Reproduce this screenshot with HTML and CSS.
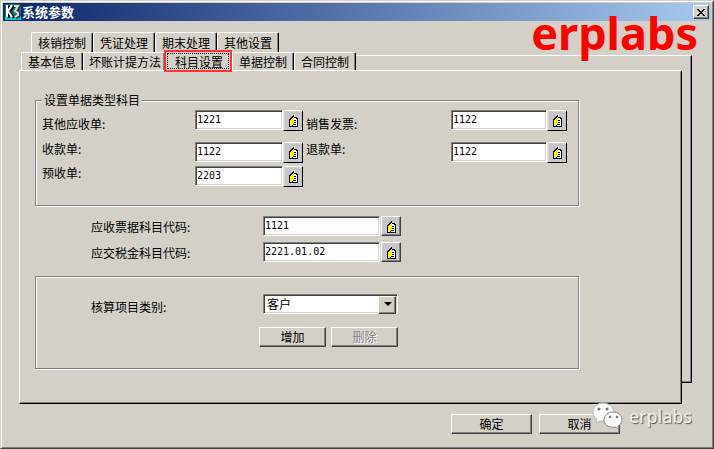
FILE: index.html
```html
<!DOCTYPE html>
<html lang="zh-CN">
<head>
  <meta charset="UTF-8">
  <meta name="viewport" content="width=device-width, initial-scale=1.0">
  <title>系统参数</title>
  <link rel="stylesheet" href="styles.css">
</head>
<body>

<svg class="symbols" aria-hidden="true">
  <symbol id="book" viewBox="0 0 9 13">
    <path d="M0 5h1V4h1V3h1V2h1V1h1v2h3v1h1v9H0z" fill="#000"/>
    <path d="M5 4h2v1h1v7H4v-1h1z" fill="#fff"/>
    <path d="M1 6h1V5h1V4h1V3h1v7H4v1H3v1H1z" fill="#ff0"/>
    <path d="M5 6h2v1H5zM5 8h2v1H5zM4 10h3v1H4z" fill="#000"/>
  </symbol>
</svg>

<div class="window">
  <header class="titlebar">
    <svg class="logo" viewBox="0 0 16 16" aria-hidden="true">
      <rect width="16" height="16" fill="#087878"/>
      <path d="M0 12h16v4H0z" fill="#00d0d0"/>
      <path d="M4 2v12M9 2L5 8l4 6" stroke="#000" stroke-width="2" fill="none"/>
      <path d="M10 2h4l-2 5 2 2v3l-3 2" stroke="#333" stroke-width="3" fill="none"/>
      <path d="M2 1v12M7 1L3 7l4 6" stroke="#fff" stroke-width="2" fill="none"/>
      <path d="M9 2h4l-3 5 3 2v2l-3 2" stroke="#ddd" stroke-width="2" fill="none"/>
    </svg>
    <h1>系统参数</h1>
    <button type="button" class="close" aria-label="关闭">
      <svg viewBox="0 0 9 7" shape-rendering="crispEdges"><path d="M0 0h2v1h1v1h2V1h1V0h2v1H7v1H6v1H5v1h1v1h1v1h1v1H6V6H5V5H3v1H2v1H0V6h1V5h1V4h1V3H2V2H1V1H0z"/></svg>
    </button>
  </header>

  <form class="content">
    <nav class="tabs tabs-back">
      <button type="button" class="tab">核销控制</button>
      <button type="button" class="tab">凭证处理</button>
      <button type="button" class="tab">期末处理</button>
      <button type="button" class="tab">其他设置</button>
    </nav>

    <div class="stack">
      <div class="sheet-back"></div>
      <div class="front">
        <nav class="tabs">
          <button type="button" class="tab">基本信息</button>
          <button type="button" class="tab tab-wide">坏账计提方法</button>
          <button type="button" class="tab active"><span>科目设置</span></button>
          <button type="button" class="tab">单据控制</button>
          <button type="button" class="tab">合同控制</button>
        </nav>

        <section class="sheet">
          <fieldset class="group accounts">
            <legend>设置单据类型科目</legend>
            <div class="account-row first">
              <label for="other">其他应收单:</label>
              <div class="field">
                <input type="text" id="other" value="1221">
                <button type="button" class="lookup" aria-label="查找"><svg><use href="#book"/></svg></button>
              </div>
              <label for="invoice">销售发票:</label>
              <div class="field">
                <input type="text" id="invoice" value="1122">
                <button type="button" class="lookup" aria-label="查找"><svg><use href="#book"/></svg></button>
              </div>
            </div>
            <div class="account-row">
              <label for="receipt">收款单:</label>
              <div class="field">
                <input type="text" id="receipt" value="1122">
                <button type="button" class="lookup" aria-label="查找"><svg><use href="#book"/></svg></button>
              </div>
              <label for="refund">退款单:</label>
              <div class="field">
                <input type="text" id="refund" value="1122">
                <button type="button" class="lookup" aria-label="查找"><svg><use href="#book"/></svg></button>
              </div>
            </div>
            <div class="account-row">
              <label for="advance">预收单:</label>
              <div class="field">
                <input type="text" id="advance" value="2203">
                <button type="button" class="lookup" aria-label="查找"><svg><use href="#book"/></svg></button>
              </div>
            </div>
          </fieldset>

          <div class="codes">
            <div class="code-row">
              <label for="bill">应收票据科目代码:</label>
              <div class="field">
                <input type="text" id="bill" value="1121">
                <button type="button" class="lookup raised" aria-label="查找"><svg><use href="#book"/></svg></button>
              </div>
            </div>
            <div class="code-row">
              <label for="tax">应交税金科目代码:</label>
              <div class="field">
                <input type="text" id="tax" value="2221.01.02">
                <button type="button" class="lookup raised" aria-label="查找"><svg><use href="#book"/></svg></button>
              </div>
            </div>
          </div>

          <div class="group category">
            <div class="code-row">
              <label for="category">核算项目类别:</label>
              <div class="select">
                <select id="category">
                  <option>客户</option>
                </select>
              </div>
            </div>
            <div class="category-actions">
              <button type="button" class="btn">增加</button>
              <button type="button" class="btn" disabled>删除</button>
            </div>
          </div>
        </section>
      </div>
    </div>

    <footer class="actions">
      <button type="submit" class="btn">确定</button>
      <button type="button" class="btn">取消</button>
    </footer>
  </form>

  <div class="brand">erplabs</div>
  <div class="wechat">
    <svg viewBox="0 0 32 28" aria-hidden="true">
      <path d="M11 1C5 1 1 5 1 10c0 3 1 5 4 7l-1 4 4-2c5 1 14 0 14-9 0-5-5-9-11-9z" fill="#fafafa" stroke="#bbb"/>
      <path d="M21 10c-5 0-9 3-9 8 0 4 4 8 11 7l4 2-1-3c3-2 4-4 4-6 0-5-4-8-9-8z" fill="#fafafa" stroke="#888"/>
      <g fill="#777"><circle cx="7" cy="7" r="1.5"/><circle cx="15" cy="7" r="1.5"/><circle cx="18" cy="15" r="1.3"/><circle cx="25" cy="15" r="1.3"/></g>
    </svg>
    <span>erplabs</span>
  </div>
</div>

</body>
</html>
```

FILE: styles.css
```css
* {
  box-sizing: border-box;
}
body {
  margin: 0;
  background: #d4d0c8;
  color: #000;
  font-family: "Noto Sans CJK SC", sans-serif;
  font-size: 12px;
  line-height: 14px;
}
button, input, select {
  font: inherit;
  color: inherit;
  margin: 0;
  padding: 0;
  border-radius: 0;
}
.symbols {
  position: absolute;
  width: 0;
  height: 0;
}
.window {
  position: relative;
  min-height: 100vh;
  padding: 1px;
  border: 1px solid;
  border-color: #d4d0c8 #404040 #404040 #d4d0c8;
  box-shadow: inset 1px 1px #fff, inset -1px -1px #808080;
}
.titlebar {
  display: flex;
  align-items: center;
  height: 18px;
  margin: 1px 1px 0;
  padding: 0 2px;
  background: linear-gradient(to right, #0a246a, #a6caf0);
}
.logo {
  width: 16px;
  height: 16px;
}
.titlebar h1 {
  flex: 1;
  margin: 0 0 0 1px;
  color: #fff;
  font-size: 13px;
  line-height: 18px;
}
.close {
  display: flex;
  align-items: center;
  justify-content: center;
  width: 16px;
  height: 14px;
  background: #d4d0c8;
  border: 1px solid;
  border-color: #fff #404040 #404040 #fff;
  box-shadow: inset -1px -1px #808080;
}
.close svg {
  width: 9px;
  height: 7px;
}

/* tabs */
.content {
  padding: 11px 20px 0 17px;
}
.tabs {
  display: flex;
  padding-left: 2px;
}
.tabs-back {
  padding-left: 12px;
}
.tab {
  width: 62px;
  height: 20px;
  background: #d4d0c8;
  border: 1px solid;
  border-color: #fff #000 transparent #fff;
  border-bottom: 0;
  border-radius: 2px 2px 0 0;
  box-shadow: inset -1px 0 #808080;
  white-space: nowrap;
}
.tab-wide {
  width: 82px;
  padding-left: 2px;
}
.tab.active {
  width: 68px;
  height: 22px;
  margin: -2px 0 0 -1px;
  padding: 1px;
  border: 2px solid #f33;
  border-radius: 0;
  box-shadow: none;
}
.tab.active span {
  display: block;
  height: 16px;
  padding-left: 2px;
  line-height: 16px;
  border: 1px dotted #000;
}
.stack {
  display: grid;
}
.sheet-back, .front {
  grid-area: 1 / 1;
}
.sheet-back {
  margin: 3px 0 21px 12px;
  border: 1px solid;
  border-color: #fff #000 #000 #fff;
  box-shadow: inset -1px -1px #808080;
}
.front {
  min-width: 0;
  margin-right: 10px;
}
.front .tabs {
  height: 18px;
}
.front .tab {
  height: 18px;
}
.front .tab.active {
  height: 22px;
}
.sheet {
  padding: 22px 102px 34px 15px;
  background: #d4d0c8;
  border: 1px solid;
  border-color: #fff #000 #000 #fff;
  box-shadow: inset -1px -1px #808080;
}

/* groups */
.group {
  margin: 0;
  border: 1px solid #808080;
  box-shadow: 1px 1px #fff, inset 1px 1px #fff;
}
.accounts {
  min-width: 0;
  padding: 3px 11px 15px 6px;
}
.accounts legend {
  padding: 0 2px;
  background: #d4d0c8;
}
.account-row {
  display: grid;
  grid-template-columns: 153fr 111fr 145fr 116fr;
  min-height: 24px;
}
.account-row.first {
  min-height: 32px;
}
.first label {
  padding-top: 7px;
}
.account-row .field:nth-child(2) {
  margin-right: 3px;
}
.field {
  display: flex;
  align-items: flex-start;
  min-width: 0;
}
.field input {
  flex: 1;
  min-width: 0;
  height: 20px;
  padding: 0 1px 1px;
  background: #fff;
  border: 1px solid;
  border-color: #808080 #fff #fff #808080;
  box-shadow: inset 1px 1px #404040, inset -1px -1px #d4d0c8;
  font-family: "DejaVu Sans Mono", monospace;
  font-size: 10px;
}
.lookup {
  display: flex;
  flex: none;
  align-items: center;
  justify-content: center;
  width: 20px;
  height: 21px;
  background: #c8c5cb;
  border: 1px solid;
  border-color: #fff #000 #000 #e8e8e8;
  box-shadow: inset 1px 1px #d4d0c8;
}
.lookup svg {
  width: 9px;
  height: 13px;
  shape-rendering: crispEdges;
}
.lookup.raised {
  height: 20px;
  margin-left: 1px;
  border-color: #fff #404040 #404040 #fff;
  box-shadow: inset -1px -1px #808080;
}
.codes {
  padding: 10px 178px 8px 56px;
}
.code-row {
  display: grid;
  grid-template-columns: 172px 1fr;
  min-height: 26px;
}
.codes label {
  padding-top: 4px;
}
.category {
  padding: 17px 180px 21px 55px;
}
.category label {
  padding-top: 6px;
}
.category .code-row {
  min-height: 33px;
}
.select {
  position: relative;
}
.select select {
  display: block;
  width: 100%;
  height: 20px;
  padding: 0 20px 0 3px;
  appearance: none;
  background: #fff;
  border: 1px solid;
  border-color: #808080 #fff #fff #808080;
  box-shadow: inset 1px 1px #404040, inset -1px -1px #d4d0c8;
}
.select::before {
  content: "";
  position: absolute;
  top: 2px;
  right: 2px;
  width: 16px;
  height: 16px;
  background: #d4d0c8;
  border: 1px solid;
  border-color: #fff #404040 #404040 #fff;
  box-shadow: inset -1px -1px #808080;
  pointer-events: none;
}
.select::after {
  content: "";
  position: absolute;
  top: 8px;
  right: 6px;
  border: 4px solid transparent;
  border-top-color: #000;
  border-bottom: 0;
  pointer-events: none;
}
.btn {
  width: 81px;
  height: 20px;
  background: #d4d0c8;
  border: 1px solid;
  border-color: #fff #404040 #404040 #fff;
  box-shadow: inset -1px -1px #808080;
}
.btn:disabled {
  color: #808080;
  text-shadow: 1px 1px #fff;
}
.category-actions {
  display: flex;
  gap: 5px;
  padding-left: 168px;
}
.category-actions .btn {
  flex: none;
  width: 67px;
}
.actions {
  display: flex;
  justify-content: flex-end;
  gap: 7px;
  padding: 10px 72px 13px 0;
}

/* marks over the window */
.brand {
  position: absolute;
  top: 6px;
  right: 15px;
  color: #f00;
  font-family: "Noto Sans", sans-serif;
  font-size: 45px;
  font-weight: bold;
  line-height: 52px;
}
.wechat {
  position: absolute;
  right: 21px;
  bottom: 18px;
  display: flex;
  align-items: center;
  gap: 5px;
  color: #f4f4f4;
  font-family: "Noto Sans", sans-serif;
  font-size: 18px;
  line-height: 28px;
  text-shadow: 1px 1px 1px #555;
}
.wechat svg {
  width: 32px;
  height: 28px;
}
```
